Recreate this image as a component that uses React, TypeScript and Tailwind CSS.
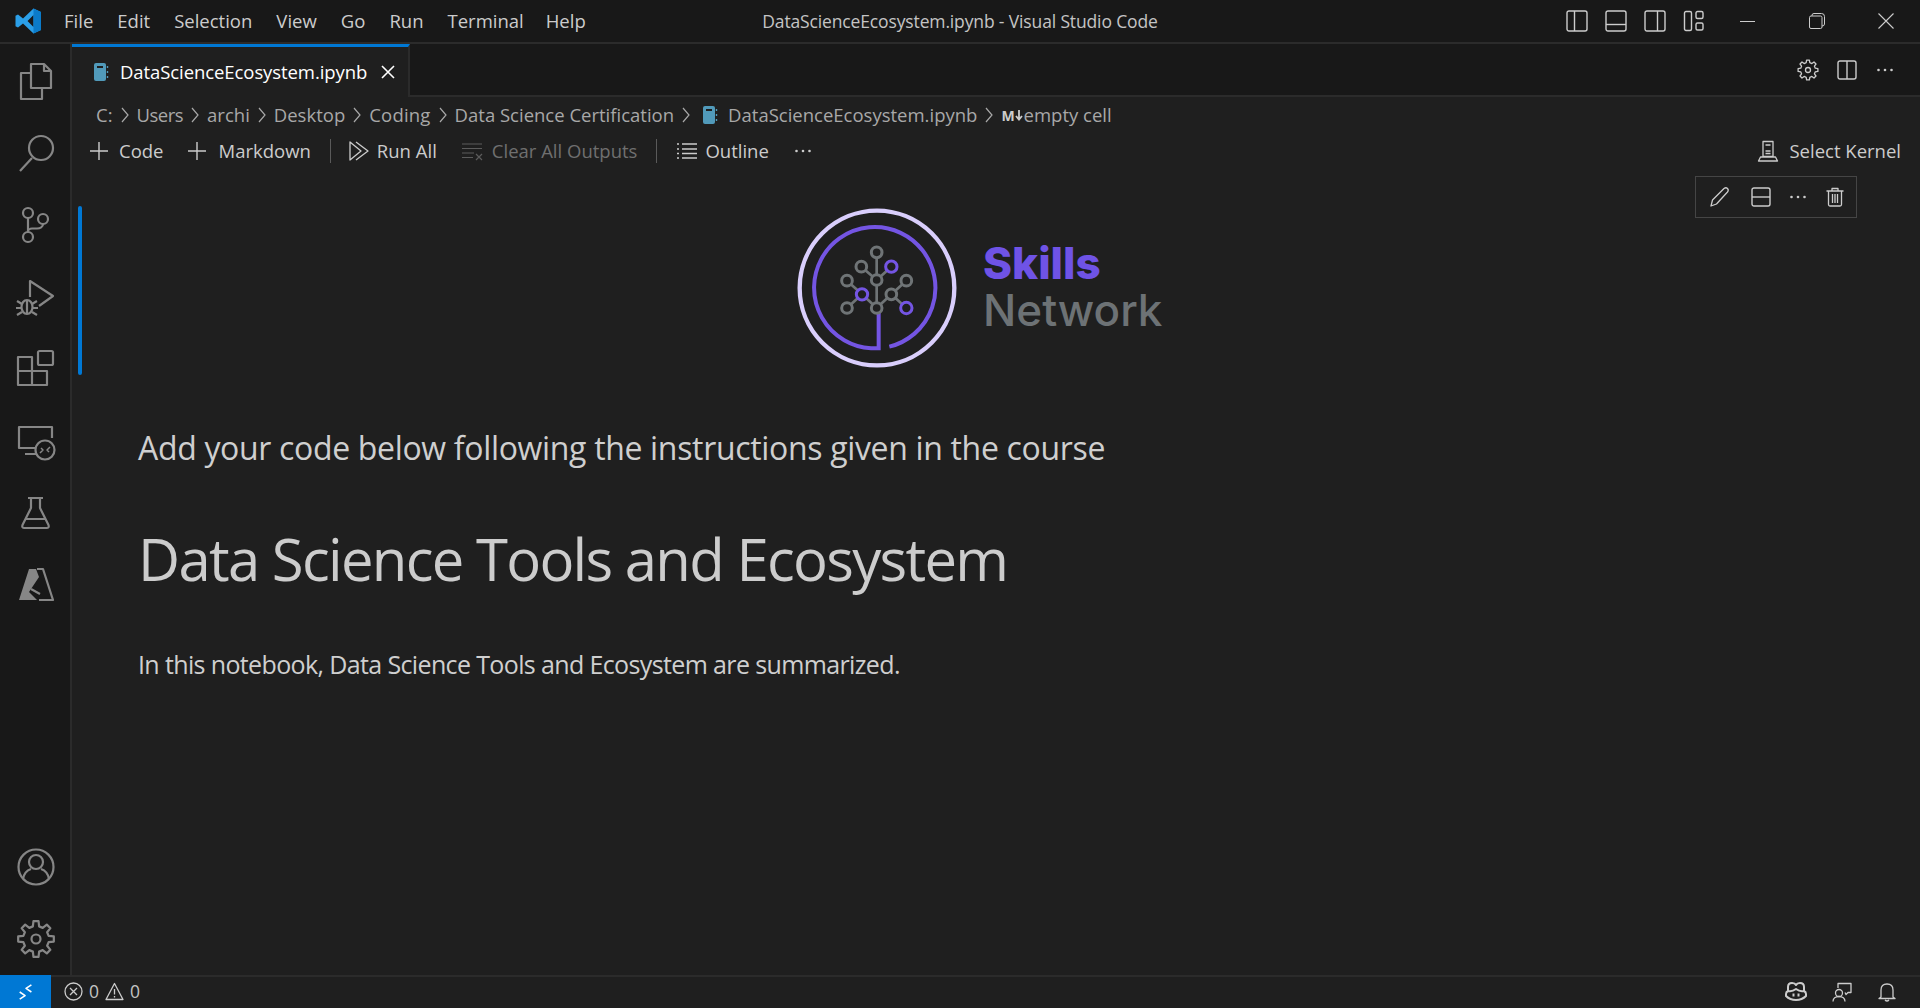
import type { ReactNode } from 'react';

const gearPath = (cx: number, cy: number, outer: number, inner: number, teeth = 8) => {
    const pts: string[] = [];
    for (let i = 0; i < teeth; i++) {
        const a = (i / teeth) * Math.PI * 2;
        const w = Math.PI / teeth;
        const steps: [number, number][] = [
            [inner, a - w * 0.62],
            [outer, a - w * 0.36],
            [outer, a + w * 0.36],
            [inner, a + w * 0.62],
        ];
        steps.forEach(([r, t]) => {
            pts.push(`${(cx + r * Math.sin(t)).toFixed(2)} ${(cy - r * Math.cos(t)).toFixed(2)}`);
        });
    }
    return `M${pts.join('L')}Z`;
};

function Ico({ size = 20, view = 20, width = 1.3, color = '#cccccc', children }: { size?: number; view?: number; width?: number; color?: string; children: ReactNode }) {
    return (
        <svg width={size} height={size} viewBox={`0 0 ${view} ${view}`} fill="none" stroke={color} strokeWidth={width} strokeLinejoin="round" className="shrink-0">
            {children}
        </svg>
    );
}

function Act({ children }: { children: ReactNode }) {
    return (
        <div className="flex h-[72px] w-full items-center justify-center">
            <Ico size={40} view={40} width={2.2} color="#868686">
                {children}
            </Ico>
        </div>
    );
}

function Chevron() {
    return (
        <svg width="10" height="18" viewBox="0 0 10 18" fill="none" stroke="#a8a8a8" strokeWidth="1.2" className="mx-[7px] shrink-0">
            <path d="M2 2l6 7-6 7" />
        </svg>
    );
}

function NotebookIcon() {
    return (
        <svg width="16" height="20" viewBox="0 0 16 20" className="shrink-0">
            <rect x="1" y="1" width="12" height="18" rx="2" fill="#519aba" />
            <rect x="4" y="4" width="6" height="2" fill="#1f1f1f" />
            <path d="M14.5 4v2M14.5 9v2M14.5 14v2" stroke="#519aba" strokeWidth="1.4" />
        </svg>
    );
}

function Dots({ color = '#cccccc' }: { color?: string }) {
    return (
        <svg width="20" height="20" viewBox="0 0 20 20" fill={color} className="shrink-0">
            <circle cx="3.5" cy="10" r="1.3" />
            <circle cx="10" cy="10" r="1.3" />
            <circle cx="16.5" cy="10" r="1.3" />
        </svg>
    );
}

function Plus() {
    return (
        <Ico size={22} view={22} width={1.4}>
            <path d="M11 2v18M2 11h18" />
        </Ico>
    );
}

function Sep() {
    return <div className="h-[24px] w-px bg-[#5a5a5a]" />;
}

function SkillsMark() {
    const grey = [
        [289, 170],
        [243, 213],
        [200, 255],
        [200, 337],
        [378, 255],
        [289, 253],
        [333, 296],
        [289, 337],
    ];
    const purple = [
        [333, 213],
        [245, 296],
        [378, 337],
    ];
    return (
        <svg width="160" height="160" viewBox="50 37 480 480" fill="none" className="shrink-0">
            <circle cx="290" cy="277" r="232" stroke="#d9cefc" strokeWidth="13" />
            <path d="M327 453A182 182 0 1 0 272 458H295V352" stroke="#7455e3" strokeWidth="12" />
            <path d="M289 185V320M243 213L289 253M333 213L289 253M200 255L245 296L289 337M200 337L245 296M378 255L333 296L289 337M333 296L378 337" stroke="#6f7476" strokeWidth="8" />
            {grey.map(([x, y]) => (
                <circle key={`${x}-${y}`} cx={x} cy={y} r="16" fill="#1f1f1f" stroke="#6f7476" strokeWidth="9" />
            ))}
            {purple.map(([x, y]) => (
                <circle key={`${x}-${y}`} cx={x} cy={y} r="17" fill="#1f1f1f" stroke="#7455e3" strokeWidth="9" />
            ))}
        </svg>
    );
}

export default function App() {
    return (
        <div className="flex h-screen w-full flex-col overflow-hidden bg-[#1f1f1f] font-['Open_Sans',sans-serif] text-[#cccccc]">
            {/* title bar */}
            <div className="relative flex h-[44px] shrink-0 items-center border-b-2 border-[#2b2b2b] bg-[#181818]">
                <div className="flex w-[54px] justify-center pl-[1px]">
                    <svg width="28" height="28" viewBox="0 0 28 28">
                        <path d="M19.5 1.5L27 5v18l-7.5 3.5L9 16.5l-5 4-2.5-1.3v-10.400L4 7.500l5 4zM19.500 8l-6 6 6 6z" fill="#2b9fe8" fillRule="evenodd" />
                        <path d="M19.500 1.500L27 5v18l-7.500 3.500z" fill="#0b7bc9" />
                    </svg>
                </div>
                <div className="flex items-center text-[18.5px]">
                    <span className="ml-[10px]">File</span>
                    <span className="ml-[24px]">Edit</span>
                    <span className="ml-[24px]">Selection</span>
                    <span className="ml-[24px]">View</span>
                    <span className="ml-[24px]">Go</span>
                    <span className="ml-[24px]">Run</span>
                    <span className="ml-[24px]">Terminal</span>
                    <span className="ml-[22px]">Help</span>
                </div>
                <div className="absolute inset-x-0 top-0 flex h-[42px] items-center justify-center text-[17.5px] tracking-[-0.14px] text-[#c4c4c4]">
                    DataScienceEcosystem.ipynb - Visual Studio Code
                </div>
                <div className="ml-auto flex items-center">
                    <div className="flex w-[39px] justify-center">
                        <Ico size={22} view={22} width={1.4}>
                            <rect x="1" y="1" width="20" height="20" rx="2" />
                            <path d="M8.500 1v20" />
                        </Ico>
                    </div>
                    <div className="flex w-[39px] justify-center">
                        <Ico size={22} view={22} width={1.4}>
                            <rect x="1" y="1" width="20" height="20" rx="2" />
                            <path d="M1 14.500h20" />
                        </Ico>
                    </div>
                    <div className="flex w-[39px] justify-center">
                        <Ico size={22} view={22} width={1.4}>
                            <rect x="1" y="1" width="20" height="20" rx="2" />
                            <path d="M13.500 1v20" />
                        </Ico>
                    </div>
                    <div className="flex w-[39px] justify-center">
                        <Ico size={22} view={22} width={1.4}>
                            <rect x="1.500" y="1.500" width="7" height="19" rx="1.500" />
                            <rect x="13" y="1.500" width="7" height="7" rx="1.500" />
                            <rect x="13" y="13" width="7" height="7" rx="1.500" />
                        </Ico>
                    </div>
                    <div className="flex h-[42px] w-[69px] items-center justify-center">
                        <div className="h-px w-[15px] bg-[#cccccc]" />
                    </div>
                    <div className="flex h-[42px] w-[69px] items-center justify-center">
                        <Ico size={16} view={16} width={1}>
                            <rect x="0.500" y="3" width="12.500" height="12.500" rx="1.500" />
                            <path d="M3 3V2.200Q3 .5 5 .5h7.500Q15.500 .5 15.500 3.500V11q0 2-2.500 2" />
                        </Ico>
                    </div>
                    <div className="flex h-[42px] w-[69px] items-center justify-center">
                        <Ico size={16} view={16} width={1.1}>
                            <path d="M.5 .5l15 15M15.500 .5l-15 15" />
                        </Ico>
                    </div>
                </div>
            </div>

            <div className="flex min-h-0 flex-1">
                {/* activity bar */}
                <div className="flex w-[72px] shrink-0 flex-col justify-between border-r-2 border-[#2b2b2b] bg-[#181818] pl-[2px] pt-[1px]">
                    <div>
                        <Act>
                            <path d="M15 3h13l7 7v17H15zM28 3v7h7" />
                            <path d="M14 12H5v26h21V28" />
                        </Act>
                        <Act>
                            <circle cx="25" cy="15" r="12" />
                            <path d="M4 38l12-13" />
                        </Act>
                        <Act>
                            <circle cx="12" cy="8" r="5" />
                            <circle cx="27" cy="14" r="5" />
                            <circle cx="12" cy="32" r="5" />
                            <path d="M12 13v14M27 19c0 3-3 4.500-6 4.500h-5c-2 0-4 1.500-4 3.500" />
                        </Act>
                        <Act>
                            <path d="M14 20V4l23 15-14 10" />
                            <ellipse cx="11" cy="30" rx="5.500" ry="7" />
                            <path d="M11 23v14M1 24l5 3M21 24l-5 3M0 31h5M17 31h5M1 38l5-3M21 38l-5-3" />
                        </Act>
                        <Act>
                            <rect x="22" y="2" width="15" height="14" rx="1.500" />
                            <path d="M16 22V8H2v28h29V22H2M16 22v14" />
                        </Act>
                        <Act>
                            <path d="M36 17V6H3v21h17M9 33h11" />
                            <circle cx="29" cy="29" r="9.500" />
                            <path d="M24 32l3-3-2-2M34 26l-3 3 2 2" strokeWidth="1.500" />
                        </Act>
                        <Act>
                            <path d="M12 5h15M15 5v10L6.500 32q-1 3 2 3h22q3 0 2-3L24 15V5M10.500 26h18" />
                        </Act>
                        <Act>
                            <path d="M13 4h7l3 8-10 15 8 8H3z" fill="#868686" stroke="none" />
                            <path d="M21 4h6l10 31H23M15 24l9 5" />
                        </Act>
                    </div>
                    <div>
                        <Act>
                            <circle cx="20" cy="20" r="17.500" />
                            <circle cx="20" cy="15" r="7" />
                            <path d="M7 32c1-6 5-9 8-10M33 32c-1-6-5-9-8-10" />
                        </Act>
                        <Act>
                            <path d={gearPath(20, 20, 18, 13)} />
                            <circle cx="20" cy="20" r="4.500" />
                        </Act>
                    </div>
                </div>

                {/* editor */}
                <div className="relative flex min-w-0 flex-1 flex-col">
                    {/* tabs */}
                    <div className="flex h-[53px] shrink-0 border-b-2 border-[#2b2b2b] bg-[#181818]">
                        <div className="mb-[-2px] flex w-[338px] items-center border-t-[3px] border-r-2 border-t-[#0078d4] border-r-[#2b2b2b] bg-[#1f1f1f] pl-[21px]">
                            <NotebookIcon />
                            <span className="ml-[11px] text-[18.500px] tracking-[-0.08px] text-white">DataScienceEcosystem.ipynb</span>
                            <div className="ml-auto mr-[13px]">
                                <Ico size={14} view={14} width={1.6} color="#ffffff">
                                    <path d="M1 1l12 12M13 1L1 13" />
                                </Ico>
                            </div>
                        </div>
                        <div className="ml-auto flex items-center gap-[18px] pr-[25px]">
                            <Ico size={22} view={22} width={1.3}>
                                <path d={gearPath(11, 11, 10, 7.500)} />
                                <circle cx="11" cy="11" r="2.500" />
                            </Ico>
                            <Ico size={20} view={20} width={1.4}>
                                <rect x="1" y="1" width="18" height="18" rx="2" />
                                <path d="M10 1v18" />
                            </Ico>
                            <Dots />
                        </div>
                    </div>

                    {/* breadcrumbs */}
                    <div className="flex h-[36px] shrink-0 items-center pl-[24px] text-[18.500px] text-[#a8a8a8]">
                        <span>C:</span>
                        <Chevron />
                        <span className="tracking-[-0.5px]">Users</span>
                        <Chevron />
                        <span>archi</span>
                        <Chevron />
                        <span>Desktop</span>
                        <Chevron />
                        <span className="tracking-[0.2px]">Coding</span>
                        <Chevron />
                        <span>Data Science Certification</span>
                        <Chevron />
                        <div className="ml-[4px] mr-[10px]">
                            <NotebookIcon />
                        </div>
                        <span>DataScienceEcosystem.ipynb</span>
                        <Chevron />
                        <span className="text-[14px] font-bold text-[#cccccc]">M</span>
                        <svg width="8" height="12" viewBox="0 0 8 12" fill="none" stroke="#cccccc" strokeWidth="1.800" className="mr-[1px] shrink-0">
                            <path d="M4 1v9M1 7l3 3.500L7 7" />
                        </svg>
                        <span>empty cell</span>
                    </div>

                    {/* notebook toolbar */}
                    <div className="flex h-[36px] shrink-0 items-center pl-[16px] pr-[19px] text-[18.500px]">
                        <Plus />
                        <span className="ml-[9px]">Code</span>
                        <div className="ml-[22px]">
                            <Plus />
                        </div>
                        <span className="ml-[11px]">Markdown</span>
                        <div className="ml-[19px] mr-[17px]">
                            <Sep />
                        </div>
                        <Ico size={22} view={22} width={1.3}>
                            <path d="M2 2v18l11-9zM8 2l12 9-12 9" />
                        </Ico>
                        <span className="ml-[7px]">Run All</span>
                        <div className="ml-[24px] opacity-50">
                            <Ico size={22} view={22} width={1.2} color="#9a9a9a">
                                <path d="M1 4h20M1 8.500h20M1 13h12M1 17.500h11M15 14l6 6M21 14l-6 6" />
                            </Ico>
                        </div>
                        <span className="ml-[9px] text-[#6f6f6f]">Clear All Outputs</span>
                        <div className="mx-[19px]">
                            <Sep />
                        </div>
                        <Ico size={22} view={22} width={1.4}>
                            <path d="M6 4h15M6 9h15M6 13.500h15M6 18h15M1 4h2M1 9h2M1 13.500h2M1 18h2" />
                        </Ico>
                        <span className="ml-[7px]">Outline</span>
                        <div className="ml-[24px]">
                            <Dots />
                        </div>
                        <div className="ml-auto flex items-center">
                            <Ico size={22} view={22} width={1.3}>
                                <path d="M6 1.500h10v15H6zM8.500 5h5M8.500 11h5M8.500 13.500h5M3.500 17h15l2 4H1.500z" />
                            </Ico>
                            <span className="ml-[10px]">Select Kernel</span>
                        </div>
                    </div>

                    {/* markdown cell */}
                    <div className="relative flex-1 pl-[66px] pt-[39px]">
                        <div className="absolute left-[6px] top-[37px] h-[169px] w-[4px] rounded-full bg-[#0078d4]" />
                        <div className="absolute right-[63px] top-[7px] flex h-[42px] w-[162px] items-center border border-[#454545] bg-[#1f1f1f] pl-[12px]">
                            <Ico size={24} view={24} width={1.3}>
                                <path d="M3 21l1.500-6L16 3.500q2-1.500 3.500 0t0 3.500L8.500 19z" />
                            </Ico>
                            <div className="ml-[19px]">
                                <Ico size={20} view={20} width={1.4}>
                                    <rect x="1" y="1" width="18" height="18" rx="2" />
                                    <path d="M1 10h18" />
                                </Ico>
                            </div>
                            <div className="ml-[17px]">
                                <Dots />
                            </div>
                            <div className="ml-[17px]">
                                <Ico size={20} view={20} width={1.3}>
                                    <path d="M1.500 4h17M7 4V1.500h6V4M3.500 4v13.500q0 1.500 1.500 1.500h10q1.500 0 1.500-1.500V4M7.500 7v9M10 7v9M12.500 7v9" />
                                </Ico>
                            </div>
                        </div>

                        <div className="flex items-center pl-[659px]">
                            <SkillsMark />
                            <div className="ml-[26px] mt-[-3px] flex flex-col font-['Inter',sans-serif] text-[44px] leading-[47px]">
                                <span className="font-extrabold text-[#6f53e6]">Skills</span>
                                <span className="font-medium text-[#6d7275]">Network</span>
                            </div>
                        </div>

                        <p className="mt-[56px] text-[32px] leading-[48px] tracking-[-0.33px] text-[#cfcfcf]">
                            Add your code below following the instructions given in the course
                        </p>
                        <h1 className="mt-[47px] text-[58px] leading-[80px] tracking-[-1.7px] text-[#cccccc]">
                            Data Science Tools and Ecosystem
                        </h1>
                        <p className="mt-[45px] text-[25px] leading-[40px] tracking-[-0.63px] text-[#cfcfcf]">
                            In this notebook, Data Science Tools and Ecosystem are summarized.
                        </p>
                    </div>
                </div>
            </div>

            {/* status bar */}
            <div className="flex h-[33px] shrink-0 items-stretch border-t-2 border-[#2b2b2b] bg-[#1f1f1f]">
                <div className="mt-[-2px] flex w-[51px] items-center justify-center bg-[#0078d4]">
                    <Ico size={18} view={20} width={1.7} color="#ffffff">
                        <path d="M3 18l6-4-6-4M16 2l-6 4 6 4" />
                    </Ico>
                </div>
                <div className="ml-[13px] mt-[-3px] flex items-center text-[17.500px] text-[#c4c4c4]">
                    <Ico size={19} view={19} width={1.3}>
                        <circle cx="9.500" cy="9.500" r="8.500" />
                        <path d="M6 6l7 7M13 6l-7 7" />
                    </Ico>
                    <span className="ml-[6px]">0</span>
                    <div className="ml-[6px]">
                        <Ico size={19} view={19} width={1.3}>
                            <path d="M9.500 1.500l8.500 16H1z" />
                            <path d="M9.500 7v5.500M9.500 14v1.500" />
                        </Ico>
                    </div>
                    <span className="ml-[6px]">0</span>
                </div>
                <div className="ml-auto mt-[-1px] flex items-center gap-[25px] pr-[23px]">
                    <Ico size={22} view={22} width={2}>
                        <path d="M3 10V6q0-4 4-4 3 0 4 2 1-2 4-2 4 0 4 4v4q2 1 2 3v2q-4 4-10 4T1 15v-2q0-2 2-3zM3 10q4 1 8-2 4 3 8 2" />
                        <path d="M8.500 12.500v3M13.500 12.500v3" />
                    </Ico>
                    <Ico size={20} view={20} width={1.3}>
                        <path d="M6 6V1.500h13v9h-3l-2 2-1-2" />
                        <circle cx="7" cy="11" r="3.500" />
                        <path d="M1 19.500c0-3 2.500-5 6-5s6 2 6 5" />
                    </Ico>
                    <Ico size={20} view={20} width={1.3}>
                        <path d="M4 15V8q0-6 6-6t6 6v7l2 1.500H2zM8 18q2 2 4 0" />
                    </Ico>
                </div>
            </div>
        </div>
    );
}
